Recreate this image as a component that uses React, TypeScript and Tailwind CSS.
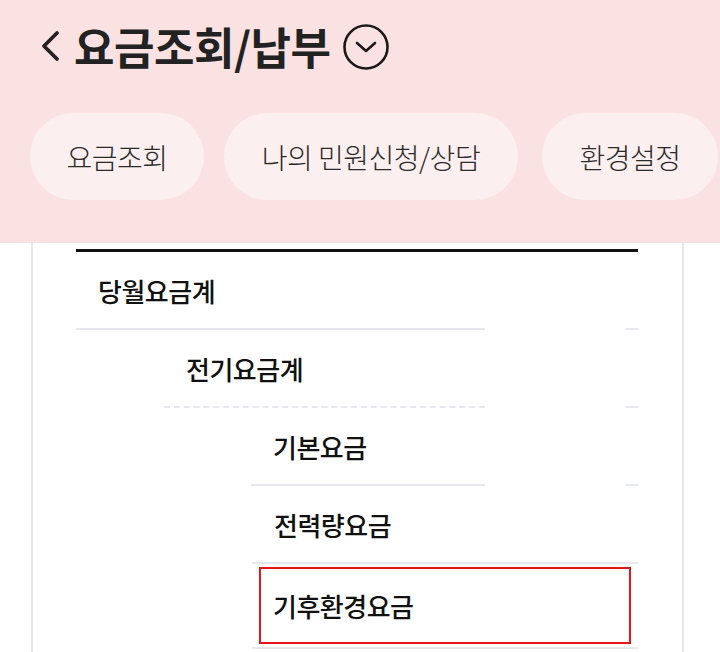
import React from "react";

const font = { fontFamily: '"Noto Sans CJK KR", "Noto Sans", sans-serif' };

function Row({
  indent,
  label,
  dashed,
  full,
  last,
}: {
  indent: number;
  label: string;
  dashed?: boolean;
  full?: boolean;
  last?: boolean;
}) {
  const b = dashed ? "border-b-2 border-dashed border-[#e6e8ee]" : "border-b-2 border-[#e6e8ee]";
  const t = "text-[26px] font-medium text-[#111] tracking-[-0.5px]";
  if (last) {
    return (
      <div className={`flex h-[85px] ${b}`} style={{ marginLeft: indent }}>
        <div className={`flex flex-1 items-center border-2 border-[#e8141b] mx-[7px] mt-[3px] mb-[3px] pl-[12px] ${t}`}>
          {label}
        </div>
      </div>
    );
  }
  if (full) {
    return (
      <div className={`flex h-[78px] items-center pl-[22px] ${t} ${b}`} style={{ marginLeft: indent }}>
        {label}
      </div>
    );
  }
  return (
    <div className="flex h-[78px]" style={{ marginLeft: indent }}>
      <div className={`flex items-center pl-[22px] ${t} ${b}`} style={{ width: 409 - indent }}>
        {label}
      </div>
      <div className="flex-1" />
      <div className={`w-[12px] ${b}`} />
    </div>
  );
}

export default function App() {
  const pill = "flex h-[87px] shrink-0 items-center justify-center rounded-full bg-[#fcefef] text-[28px] font-light text-[#2a2a2a] tracking-[-0.5px]";
  return (
    <div className="w-[720px] h-[652px] overflow-hidden bg-white" style={font}>
      <div className="h-[243px] bg-[#fae2e2]">
        <div className="flex h-[92px] items-center pl-[39px]">
          <svg width="24" height="34" viewBox="0 0 24 34" className="mr-[11px]">
            <path d="M18 4 L5 17 L18 30" fill="none" stroke="#222" strokeWidth="3.8" strokeLinecap="round" strokeLinejoin="round" />
          </svg>
          <span className="text-[44px] font-bold text-[#222] leading-none tracking-[-0.5px]">요금조회/납부</span>
          <svg width="48" height="48" viewBox="0 0 48 48" className="ml-[12px] mt-[2px]">
            <circle cx="24" cy="24" r="21.5" fill="none" stroke="#1a1a1a" strokeWidth="2.6" />
            <path d="M15 20 L24 28 L33 20" fill="none" stroke="#1a1a1a" strokeWidth="2.6" strokeLinecap="round" strokeLinejoin="round" />
          </svg>
        </div>
        <div className="flex gap-[20px] pl-[30px] pt-[21px] whitespace-nowrap">
          <div className={`${pill} w-[174px]`}>요금조회</div>
          <div className={`${pill} w-[294px]`}>나의 민원신청/상담</div>
          <div className={`${pill} w-[176px] ml-[4px]`}>환경설정</div>
        </div>
      </div>
      <div className="ml-[31px] w-[653px] h-[409px] border-x-2 border-[#e6e8ee] pl-[43px] pr-[44px] pt-[6px]">
        <div className="h-[3px] bg-[#111]" />
        <Row indent={0} label="당월요금계" />
        <Row indent={88} label="전기요금계" dashed />
        <Row indent={175} label="기본요금" />
        <Row indent={176} label="전력량요금" full />
        <Row indent={176} label="기후환경요금" last />
      </div>
    </div>
  );
}
